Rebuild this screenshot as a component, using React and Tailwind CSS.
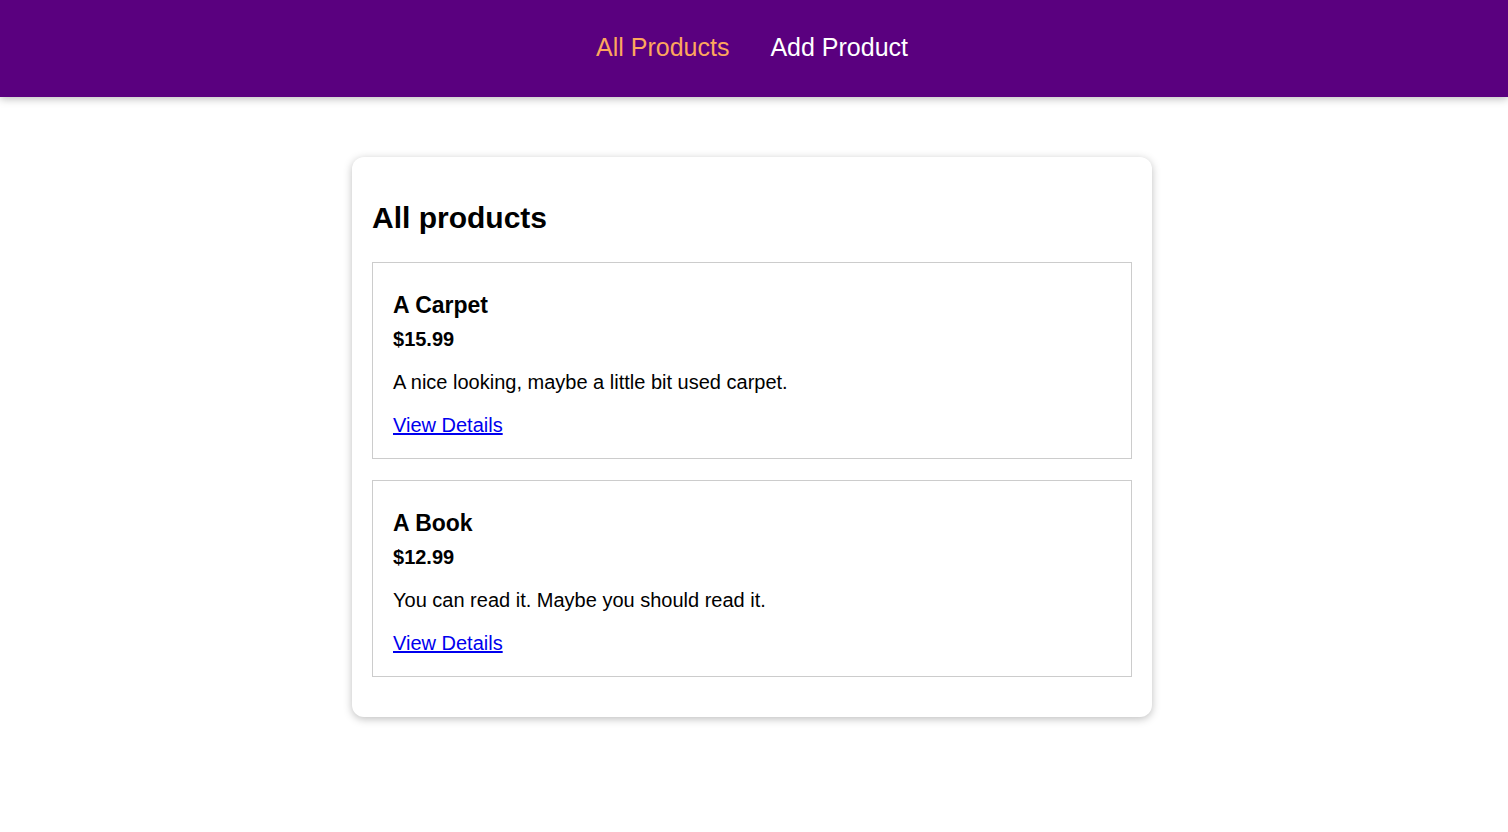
import React from "react";

const products = [
  {
    id: "p1",
    title: "A Carpet",
    price: 15.99,
    description: "A nice looking, maybe a little bit used carpet.",
  },
  {
    id: "p2",
    title: "A Book",
    price: 12.99,
    description: "You can read it. Maybe you should read it.",
  },
];

const ProductItem = ({ title, price, description }) => {
  return (
    <li className="border border-[#ccc] px-5 pt-[29px] pb-[21px] mb-[21px]">
      <h3 className="text-[23px] leading-[26px] font-bold">{title}</h3>
      <h4 className="mt-[10px] text-[20px] leading-[23px] font-bold">${price.toFixed(2)}</h4>
      <p className="mt-5 text-[20px] leading-[23px]">{description}</p>
      <p className="mt-5 text-[20px] leading-[23px]">
        <a href="#" className="text-[#0000ee] underline">
          View Details
        </a>
      </p>
    </li>
  );
};

export default function App() {
  return (
    <div className="min-h-[832px] pr-[4px] bg-white text-black font-['Liberation_Sans',Arial,sans-serif]">
      <header className="h-[97px] -mr-[4px] pr-[4px] pb-[2px] bg-[#5a007f] flex items-center justify-center shadow-[0_2px_8px_rgba(0,0,0,0.26)]">
        <nav>
          <ul className="flex gap-[41px] text-[25px] leading-[29px]">
            <li>
              <a href="#" className="text-[#fda65d]">All Products</a>
            </li>
            <li>
              <a href="#" className="text-white">Add Product</a>
            </li>
          </ul>
        </nav>
      </header>

      <main className="pt-[60px]">
        <section className="w-[800px] mx-auto bg-white rounded-[12px] px-5 pt-[44px] pb-[19px] shadow-[0_2px_8px_rgba(0,0,0,0.26)]">
          <h1 className="text-[30px] leading-[34px] font-bold mb-[27px]">All products</h1>
          <ul>
            {products.map((p) => (
              <ProductItem key={p.id} {...p} />
            ))}
          </ul>
        </section>
      </main>
    </div>
  );
}
